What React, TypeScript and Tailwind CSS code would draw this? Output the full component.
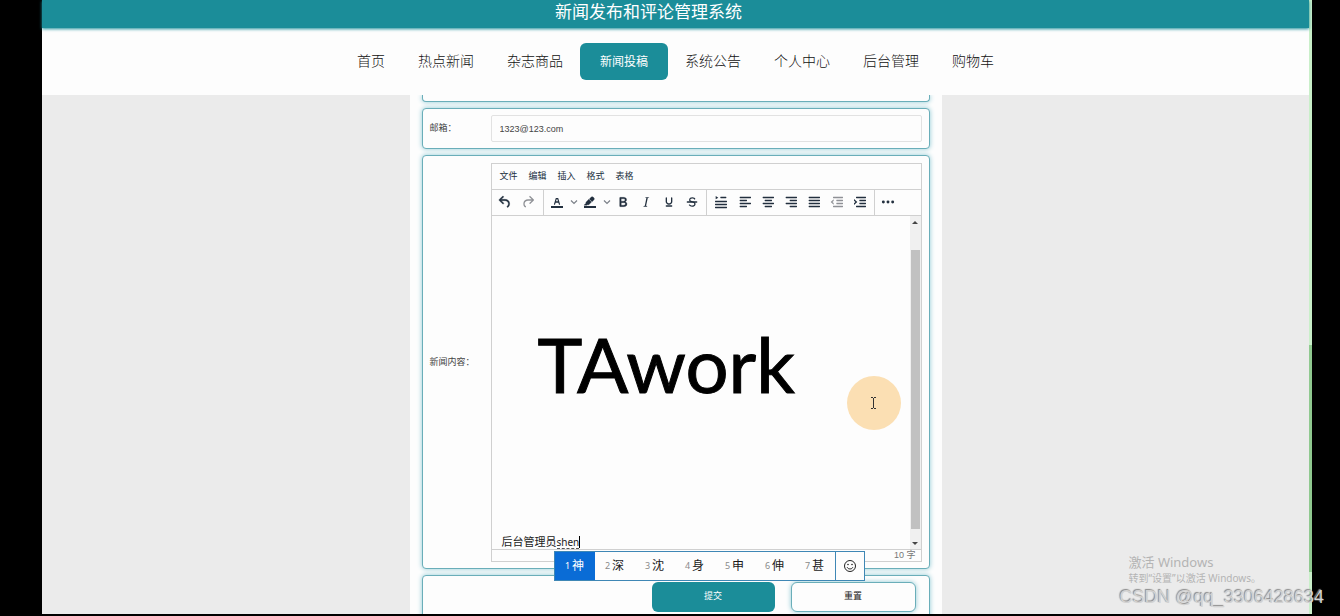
import type { ReactNode } from 'react';

const navItems = ['首页', '热点新闻', '杂志商品', '新闻投稿', '系统公告', '个人中心', '后台管理', '购物车'];
const menus = ['文件', '编辑', '插入', '格式', '表格'];
const candidates = ['神', '深', '沈', '身', '申', '伸', '甚'];

const card = 'border border-[#6aaeb9] bg-[#fdfdfd] shadow-[0_0_5px_#8cc8d4]';

function Icon({ children }: { children: ReactNode }) {
  return (
    <svg viewBox="0 0 24 24" className="size-4 shrink-0" fill="currentColor" aria-hidden="true">
      {children}
    </svg>
  );
}

function Tool({ label, wide, dim, children }: { label: string; wide?: boolean; dim?: boolean; children: ReactNode }) {
  return (
    <button
      type="button"
      aria-label={label}
      className={`flex h-6 items-center justify-center ${wide ? 'w-[25px]' : 'w-[23px]'} ${dim ? 'text-[#8f9196]' : 'text-[#222f3e]'}`}
    >
      <Icon>{children}</Icon>
    </button>
  );
}

function Chevron({ label }: { label: string }) {
  return (
    <button type="button" aria-label={label} className="flex h-6 w-[10px] items-center justify-center text-[#7b8088]">
      <svg viewBox="0 0 10 10" className="size-[10px]" fill="none" stroke="currentColor" strokeWidth="1.2" aria-hidden="true">
        <path d="M2 3.5l3 3 3-3" />
      </svg>
    </button>
  );
}

function Rows({ rows }: { rows: number[][] }) {
  return (
    <>
      {rows.map(([x, y, w]) => (
        <rect key={`${x}-${y}`} x={x} y={y} width={w} height="2.2" rx="0.6" />
      ))}
    </>
  );
}

function Toolbar() {
  return (
    <div role="toolbar" className="flex h-[26px] border-b border-[#d0d0d0]">
      <div className="flex border-r border-[#d0d0d0] pr-[3px] pl-[2px]">
        <Tool label="撤销">
          <path stroke="currentColor" strokeWidth=".6" d="M6.4 8H12c3.7 0 6.2 2 6.8 5.1.6 2.7-.4 5.6-2.3 6.8a1 1 0 01-1-1.8c1.1-.6 1.8-2.7 1.4-4.6-.5-2.1-2.1-3.5-4.9-3.5H6.4l3.3 3.3a1 1 0 11-1.4 1.4l-5-5a1 1 0 010-1.4l5-5a1 1 0 011.4 1.4L6.4 8z" />
        </Tool>
        <Tool label="重做" dim>
          <path d="M17.6 10H12c-2.8 0-4.4 1.4-4.9 3.5-.4 2 .3 4 1.4 4.6a1 1 0 11-1 1.8c-2-1.2-2.9-4.1-2.3-6.8.6-3 3-5.1 6.8-5.1h5.6l-3.3-3.3a1 1 0 111.4-1.4l5 5a1 1 0 010 1.4l-5 5a1 1 0 01-1.4-1.4l3.3-3.3z" />
        </Tool>
      </div>
      <div className="flex border-r border-[#d0d0d0] px-[2px]">
        <Tool label="文字颜色">
          <path d="M3 18h18v3H3z" />
          <path fillRule="evenodd" d="M8.7 16h-.8a.5.5 0 01-.5-.6l2.7-9c.1-.3.3-.4.5-.4h2.8c.2 0 .4.1.5.4l2.7 9a.5.5 0 01-.5.6h-.8a.5.5 0 01-.4-.4l-.7-2.2c0-.3-.3-.4-.5-.4h-3.4c-.2 0-.4.1-.5.4l-.7 2.2c0 .3-.2.4-.4.4zm2.6-7.6l-.6 2a.5.5 0 00.5.6h1.6a.5.5 0 00.5-.6l-.6-2c0-.3-.3-.4-.5-.4h-.4c-.2 0-.4.1-.5.4z" />
        </Tool>
        <Chevron label="选择文字颜色" />
        <Tool label="背景颜色">
          <path d="M3 18h18v3H3z" />
          <path stroke="currentColor" strokeWidth=".5" d="M7.7 16.7H3l3.3-3.3-.7-.8L10.2 8l4 4.1-4 4.2c-.2.2-.6.2-.8 0l-.6-.7-1.1 1.1zm5-7.5L11 7.4l3-2.9a2 2 0 012.6 0L18 6c.7.7.7 2 0 2.7l-2.9 2.9-1.8-1.8-.5-.6" />
        </Tool>
        <Chevron label="选择背景颜色" />
        <Tool label="粗体">
          <path fillRule="evenodd" stroke="currentColor" strokeWidth=".4" d="M7.8 19c-.3 0-.5 0-.6-.2l-.2-.5V5.7c0-.2 0-.4.2-.5l.6-.2h5c1.5 0 2.7.3 3.5 1 .7.6 1.1 1.4 1.1 2.5a3 3 0 01-.6 1.9c-.4.6-1 1-1.6 1.2.4.1.9.3 1.3.6s.8.7 1 1.2c.4.4.5 1 .5 1.6 0 1.3-.4 2.3-1.3 3-.8.7-2.1 1-3.8 1H7.8zm5-8.3c.6 0 1.2-.1 1.6-.5.4-.3.6-.7.6-1.3 0-1.1-.8-1.7-2.3-1.7H9.3v3.5h3.4zm.5 6c.7 0 1.3-.1 1.7-.4.4-.4.6-.9.6-1.5s-.2-1-.7-1.4c-.4-.3-1-.4-2-.4H9.4v3.8h4z" />
        </Tool>
        <Tool label="斜体">
          <path d="M16.7 4.7l-.1.9h-.3c-.6 0-1 0-1.4.3-.3.3-.4.6-.5 1.1l-2.1 9.8v.6c0 .5.4.8 1.4.8h.2l-.2.8H8l.2-.8h.2c1.1 0 1.8-.5 2-1.5l2-9.8.1-.5c0-.6-.4-.8-1.4-.8h-.3l.2-.9h5.8z" />
        </Tool>
        <Tool label="下划线">
          <path d="M16 5c.6 0 1 .4 1 1v5.5a4 4 0 01-.4 1.8l-1 1.4a5.3 5.3 0 01-5.5 1 5 5 0 01-1.6-1c-.5-.4-.8-.9-1.1-1.4a4 4 0 01-.4-1.8V6c0-.6.4-1 1-1s1 .4 1 1v5.5c0 .3 0 .6.2 1l.6.7a3.3 3.3 0 002.2.8 3.4 3.4 0 002.2-.8c.3-.2.4-.5.6-.8l.2-.9V6c0-.6.4-1 1-1zM8 17h8c.6 0 1 .4 1 1s-.4 1-1 1H8a1 1 0 010-2z" />
        </Tool>
        <Tool label="删除线">
          <path d="M15.6 8.5c-.5-.7-1-1.1-1.3-1.3-.6-.4-1.3-.6-2-.6-2.7 0-2.8 1.7-2.8 2.1 0 1.6 1.8 2 3.2 2.3 4.4.9 4.6 2.8 4.6 3.9 0 1.4-.7 4.1-5 4.1A6.2 6.2 0 017 16.4l1.5-1.1c.4.6 1.6 2 3.7 2 1.6 0 2.5-.4 3-1.2.4-.8.3-2-.8-2.6-.7-.4-1.6-.7-2.9-1-1-.2-3.9-.8-3.9-3.6C7.6 6 10.3 5 12.4 5c2.9 0 4.2 1.6 4.7 2.4l-1.5 1.1z" />
          <path d="M5 11h14a1 1 0 010 2H5a1 1 0 010-2z" />
        </Tool>
      </div>
      <div className="flex border-r border-[#d0d0d0] px-[2px]">
        <Tool label="行高" wide>
          <path d="M4 3l4 2.500L4 8z" />
          <Rows rows={[[11, 4, 9], [3, 10, 18], [3, 14.5, 18], [3, 19, 18]]} />
        </Tool>
        <Tool label="左对齐"><Rows rows={[[4, 4, 17], [4, 8.5, 11], [4, 13, 17], [4, 17.5, 11]]} /></Tool>
        <Tool label="居中"><Rows rows={[[4, 4, 17], [7, 8.5, 11], [4, 13, 17], [7, 17.5, 11]]} /></Tool>
        <Tool label="右对齐"><Rows rows={[[4, 4, 17], [10, 8.5, 11], [4, 13, 17], [10, 17.5, 11]]} /></Tool>
        <Tool label="两端对齐"><Rows rows={[[4, 4, 17], [4, 8.5, 17], [4, 13, 17], [4, 17.5, 17]]} /></Tool>
        <Tool label="减少缩进" dim>
          <path d="M7 8v2.500L5 12l2 1.500V16l-4.500-4z" />
          <Rows rows={[[6, 4, 15], [11, 8.5, 10], [11, 13, 10], [6, 17.5, 15]]} />
        </Tool>
        <Tool label="增加缩进">
          <path d="M3 7.500L8 12l-5 4.500V14l2-2-2-2z" />
          <Rows rows={[[6, 4, 15], [11, 8.5, 10], [11, 13, 10], [6, 17.5, 15]]} />
        </Tool>
      </div>
      <div className="flex px-[2px]">
        <Tool label="更多">
          <circle cx="5" cy="12" r="2.200" />
          <circle cx="12" cy="12" r="2.200" />
          <circle cx="19" cy="12" r="2.200" />
        </Tool>
      </div>
    </div>
  );
}

function InputMethod() {
  return (
    <div className="absolute top-full left-[62px] z-10 mt-[2px] flex h-[30px] w-[311px] border border-[#3f87b5] bg-[#fdfdfd] font-['Noto_Sans','Noto_Sans_CJK_SC',sans-serif]">
      {candidates.map((word, i) => (
        <button
          key={word}
          type="button"
          className={`flex w-10 items-center justify-center gap-[2px] ${i === 0 ? 'bg-[#0a6cd6] text-white' : 'text-[#1a1a1a]'}`}
        >
          <span className={`text-[9px] ${i === 0 ? 'text-white' : 'text-[#8a8a8a]'}`}>{i + 1}</span>
          <span className="text-xs">{word}</span>
        </button>
      ))}
      <button type="button" aria-label="表情" className="flex flex-1 items-center justify-center border-l border-[#3f87b5] text-[#222]">
        <svg viewBox="0 0 14 14" className="size-[14px]" fill="none" stroke="currentColor" aria-hidden="true">
          <circle cx="7" cy="7" r="5.500" />
          <path d="M4.200 8.300c.7 2.200 4.900 2.200 5.600 0" />
          <circle cx="5" cy="5.500" r=".8" fill="currentColor" stroke="none" />
          <circle cx="9" cy="5.500" r=".8" fill="currentColor" stroke="none" />
        </svg>
      </button>
    </div>
  );
}

function Editor() {
  return (
    <div className="min-w-0 flex-1 border border-[#d0d0d0]">
      <div role="menubar" className="flex h-[26px] items-center gap-[11px] border-b border-[#d0d0d0] px-2 text-[9px] text-[#222f3e]">
        {menus.map((m) => (
          <button key={m} type="button" role="menuitem">{m}</button>
        ))}
      </div>
      <Toolbar />
      <div className="relative flex h-[333px]">
        <div role="textbox" aria-label="新闻内容" className="flex min-w-0 flex-1 flex-col justify-end pl-[10px] text-[#222]">
          <div className="flex flex-1 items-center pl-9 font-['Lato',sans-serif] text-[76px] leading-none text-black [-webkit-text-stroke:1px_black]">
            <span className="pb-6">TAwork</span>
          </div>
          <p className="flex items-center text-[11px] leading-[14px]">
            后台管理员<span className="border-b border-dashed border-[#555] font-['Noto_Sans',sans-serif] text-[10px] leading-[12px]">shen</span>
            <span className="h-3 w-px bg-black" />
          </p>
        </div>
        <div className="flex w-[11px] flex-col items-center bg-[#f0f0f0] pt-1 pb-[3px] text-[#444]">
          <svg viewBox="0 0 6 4" className="h-1 w-[6px]" fill="currentColor" aria-hidden="true"><path d="M0 4l3-3 3 3z" /></svg>
          <div className="mt-[26px] mb-[13px] w-[9px] flex-1 bg-[#c1c1c1]" />
          <svg viewBox="0 0 6 4" className="h-1 w-[6px]" fill="currentColor" aria-hidden="true"><path d="M0 0l3 3 3-3z" /></svg>
        </div>
        <div className="absolute top-40 right-5 flex size-[54px] items-center justify-center rounded-full bg-[#fbdfb3]">
          <svg viewBox="0 0 7 12" className="h-3 w-[7px]" fill="none" stroke="#333" aria-hidden="true">
            <path d="M1 .5h2M4 .5h2M3.500 1v10M1 11.500h2M4 11.500h2" />
          </svg>
        </div>
        <InputMethod />
      </div>
      <div className="flex h-3 items-center justify-end border-t border-[#d0d0d0] pr-[5px] text-[9px] text-[#777]">10 字</div>
    </div>
  );
}

export default function App() {
  return (
    <div className="flex h-screen overflow-hidden bg-black pr-7 pb-[2px] pl-[42px] font-['Liberation_Sans','Noto_Sans_CJK_SC',sans-serif]">
      <div className="relative flex min-w-0 flex-1 flex-col bg-[#ebebeb]">
        <header className="z-10 flex h-7 shrink-0 justify-center bg-[#1b8d99] pr-[54px] shadow-[0_1px_3px_#1b8d99]">
          <h1 className="text-[17px] leading-[26px] text-white">新闻发布和评论管理系统</h1>
        </header>
        <nav className="flex h-[67px] shrink-0 items-center justify-center gap-px bg-[#fdfdfd]">
          {navItems.map((item) =>
            item === '新闻投稿' ? (
              <a key={item} href="#" aria-current="page" className="flex h-[37px] items-center rounded-md bg-[#1b8d99] px-5 text-xs text-white">
                {item}
              </a>
            ) : (
              <a key={item} href="#" className="flex h-[37px] items-center px-4 pb-[2px] text-sm font-light text-[#111]">
                {item}
              </a>
            ),
          )}
        </nav>
        <main className="flex min-h-0 flex-1 justify-center overflow-hidden">
          <form className="flex w-[532px] flex-col gap-[6px] bg-[#fdfdfd] px-3 text-[9px] text-[#444]">
            <div className={`h-[7px] shrink-0 rounded-b border-t-0 ${card}`} />
            <div className={`flex shrink-0 items-center rounded px-[7px] py-[6px] ${card}`}>
              <label htmlFor="email" className="w-[61px]">邮箱：</label>
              <input
                id="email"
                type="email"
                defaultValue="1323@123.com"
                className="h-[27px] min-w-0 flex-1 rounded-xs border border-[#e2e2e2] px-2 text-[9px] text-[#444] outline-none"
              />
            </div>
            <div className={`flex shrink-0 items-center rounded px-[7px] pt-[7px] pb-[6px] ${card}`}>
              <span className="w-[61px]">新闻内容：</span>
              <Editor />
            </div>
            <div className={`flex shrink-0 items-start justify-end gap-4 rounded px-[13px] pt-[6px] pb-5 ${card}`}>
              <button type="submit" className="h-[30px] w-[123px] rounded-md bg-[#1b8d99] text-white">提交</button>
              <button type="reset" className={`h-[30px] w-[125px] rounded-md text-[#222] ${card}`}>重置</button>
            </div>
          </form>
        </main>
        <div className="absolute right-12 bottom-7 text-[#b4b4b4]">
          <p className="font-['Noto_Sans','Noto_Sans_CJK_SC',sans-serif] text-[13px] leading-[18px]">激活 Windows</p>
          <p className="font-['Noto_Sans','Noto_Sans_CJK_SC',sans-serif] text-[10px] leading-[15px]">转到“设置”以激活 Windows。</p>
        </div>
      </div>
      <div className="flex w-[3px] flex-col bg-[#c9efc9]">
        <div className="flex-[345]" />
        <div className="flex-[227] bg-[#8fc98f]" />
        <div className="flex-[42]" />
      </div>
      <p className="absolute right-4 bottom-[7px] z-20 text-lg leading-6 text-[#d2d2d2] [text-shadow:-1px_-1px_1px_#888]">CSDN @qq_3306428634</p>
    </div>
  );
}
